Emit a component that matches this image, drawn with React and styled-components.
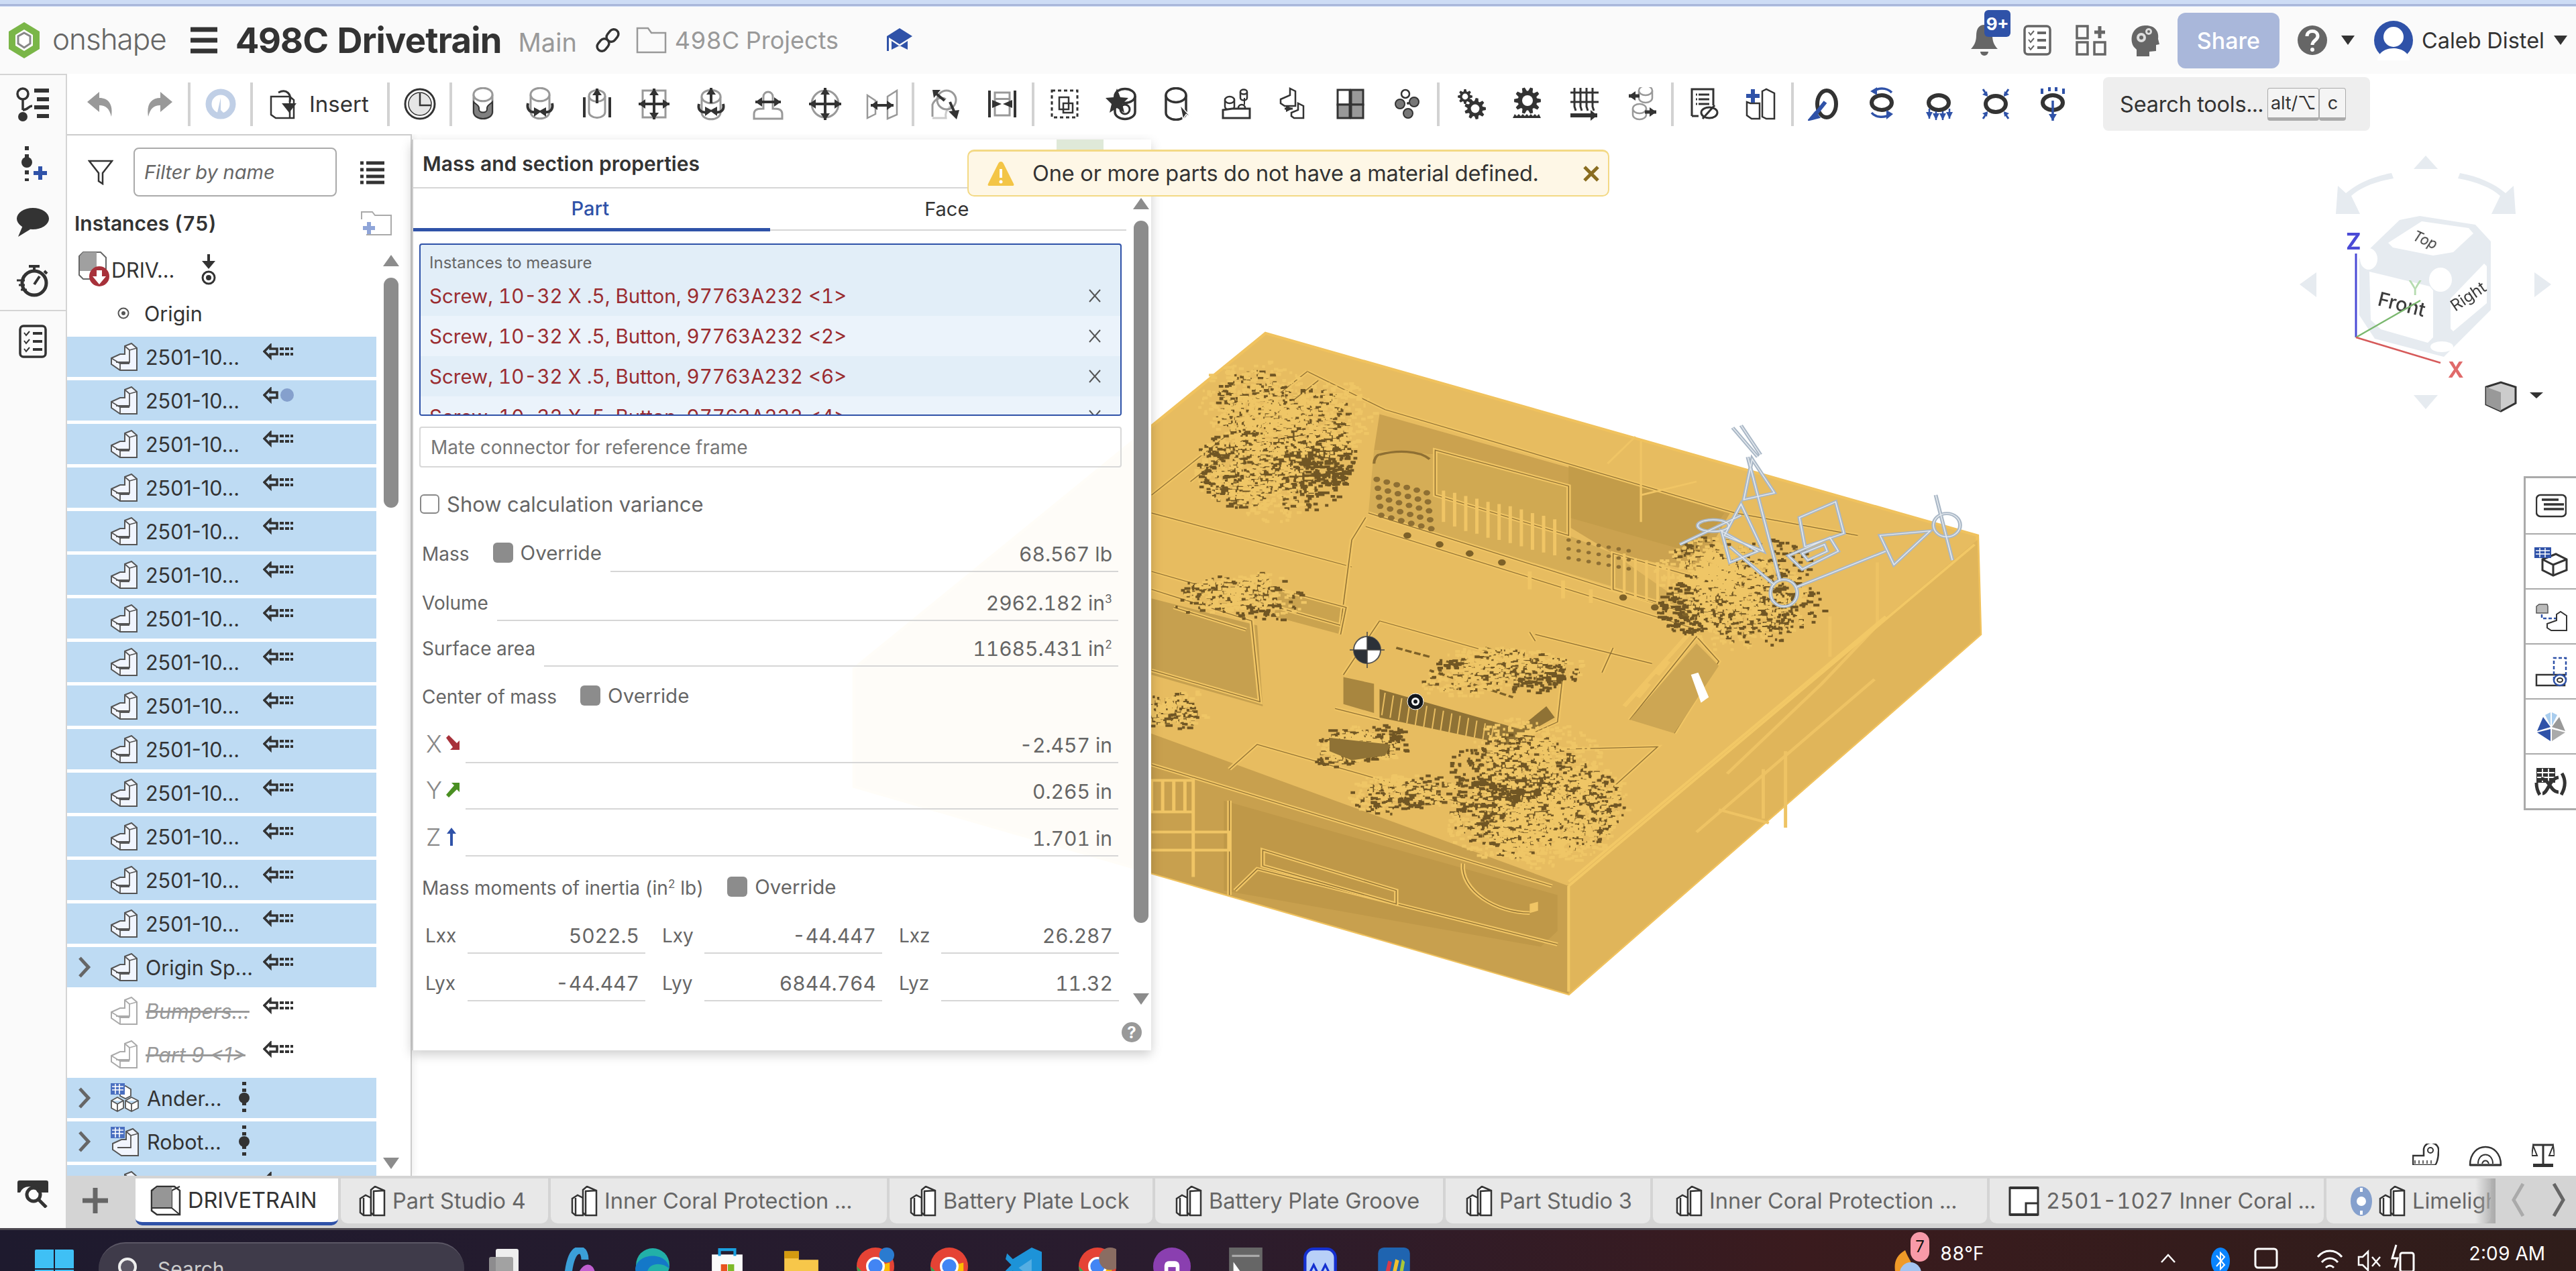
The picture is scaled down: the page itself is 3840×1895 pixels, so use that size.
import React from 'react'
import styled, { createGlobalStyle } from 'styled-components'

const D = '#333'
const G = '#999'
const B = '#2f52a8'

const Global = createGlobalStyle`
  html, body { margin: 0; padding: 0; background: #fff; overflow: hidden; }
  * { box-sizing: border-box; }
  body { font-family: Inter, "Noto Sans", sans-serif; color: #333; font-variant-numeric: tabular-nums; }
`

const Page = styled.div`
  width: 3840px;
  height: 1895px;
  display: flex;
  flex-direction: column;
  overflow: hidden;
`
const TopStrip = styled.div`
  height: 10px;
  background: #cddcf5;
  border-bottom: 1px solid #cddcf5;
  box-shadow: inset 0 -3px 0 #a9b7da;
`
const Header = styled.header`
  height: 100px;
  background: #fafafa;
  display: flex;
  align-items: center;
  padding-left: 12px;
`
const LogoText = styled.span`
  font-size: 44px;
  font-weight: 300;
  color: #666;
  margin: -4px 36px 0 18px;
  letter-spacing: -1px;
`
const DocTitle = styled.h1`
  margin: 0 0 0 28px;
  font-size: 52.5px;
  font-weight: 700;
  color: #333;
  letter-spacing: -.8px;
`
const Muted = styled.span`
  font-size: ${p => p.$size || 38}px;
  color: #999;
  margin: ${p => p.$m || '0'};
`
const HeaderRight = styled.div`
  margin-left: auto;
  display: flex;
  align-items: center;
  position: relative;
`
const Badge = styled.span`
  position: absolute;
  left: 39px;
  top: -20px;
  width: 39px;
  height: 40px;
  border-radius: 6px;
  background: ${B};
  color: #fff;
  font-size: 26px;
  font-weight: 700;
  display: flex;
  align-items: center;
  justify-content: center;
`
const ShareBtn = styled.button`
  width: 152px;
  height: 83px;
  border: 0;
  border-radius: 12px;
  background: #a9b7da;
  color: #fff;
  font: 500 34px Inter, sans-serif;
  margin: 0 26px 0 9px;
`
const UserName = styled.span`
  font-size: 32.5px;
  color: #333;
  margin: 0 14px 0 12px;
  white-space: nowrap;
`
const HeadIcon = styled.span`
  display: flex;
  width: ${p => p.$w || 80}px;
  justify-content: center;
  position: relative;
`

const Body = styled.div`
  flex: 1;
  display: flex;
  min-height: 0;
`
const Rail = styled.nav`
  width: 100px;
  background: #fafafa;
  border-right: 2px solid #d4d4d4;
  border-top: 2px solid #d4d4d4;
  display: flex;
  flex-direction: column;
  align-items: center;
`
const RailSlot = styled.div`
  height: ${p => p.$h || 88}px;
  width: 100%;
  display: flex;
  align-items: center;
  justify-content: center;
  border-bottom: ${p => (p.$line ? '2px solid #d4d4d4' : '0')};
`
const RailFoot = styled.div`
  margin-top: auto;
  height: 72px;
  display: flex;
  align-items: flex-start;
`
const Main = styled.main`
  flex: 1;
  display: flex;
  flex-direction: column;
  min-width: 0;
`
const Toolbar = styled.div`
  height: 90px;
  display: flex;
  align-items: center;
  padding-left: 6px;
  background: #fff;
`
const Tool = styled.span`
  width: 85px;
  height: 50px;
  display: flex;
  align-items: center;
  justify-content: center;
  flex: none;
`
const ToolGroup = styled.div`
  display: flex;
  align-items: center;
  padding-left: ${p => p.$pl || 0}px;
  padding-right: ${p => p.$pr || 0}px;
`
const Sep = styled.i`
  width: 4px;
  height: 65px;
  background: #d2d2d2;
  flex: none;
`
const InsertBtn = styled.div`
  width: 200px;
  display: flex;
  align-items: center;
  gap: 12px;
  padding-left: 22px;
  font-size: 33px;
  color: #333;
`
const SearchPill = styled.div`
  margin-left: 31px;
  width: 398px;
  height: 80px;
  border-radius: 8px;
  background: #eee;
  display: flex;
  align-items: center;
  padding-left: 25px;
  font-size: 32.5px;
  letter-spacing: -.2px;
  color: #333;
  white-space: nowrap;
`
const Kbd = styled.kbd`
  font: 27px Inter, sans-serif;
  height: 49px;
  padding: 0 4px;
  min-width: 40px;
  margin-left: ${p => p.$ml || 0}px;
  display: flex;
  align-items: center;
  justify-content: center;
  border: 1px solid #aaa;
  border-bottom: 5px solid #aaa;
  border-radius: 4px;
  background: #f4f4f4;
`

const Workspace = styled.section`
  flex: 1;
  position: relative;
  min-height: 0;
  overflow: hidden;
  background: #fff;
`
const ModelCanvas = styled.svg`
  position: absolute;
  left: 0;
  top: 0;
`

/* instance list */
const ListPanel = styled.aside`
  position: relative;
  width: 514px;
  height: 100%;
  background: #fff;
  border-top: 2px solid #ccc;
  border-right: 2px solid #ccc;
  display: flex;
  flex-direction: column;
  overflow: hidden;
  box-shadow: 4px 0 8px rgba(0, 0, 0, .06);
`
const FilterRow = styled.div`
  display: flex;
  align-items: center;
  padding-top: 18px;
  height: 91px;
  flex: none;
`
const FunnelSlot = styled.div`
  width: 99px;
  display: flex;
  justify-content: center;
`
const FilterBox = styled.div`
  width: 303px;
  height: 73px;
  margin-right: 35px;
  border: 2px solid #aaa;
  border-radius: 8px;
  display: flex;
  align-items: center;
  padding-left: 14px;
  font-size: 29px;
  font-style: italic;
  color: #666;
`
const ListHead = styled.div`
  height: 79px;
  flex: none;
  display: flex;
  align-items: center;
  justify-content: space-between;
  padding: 0 28px 0 11px;
  font-size: 30px;
  font-weight: 600;
`
const ListScroll = styled.div`
  flex: 1;
  display: flex;
  min-height: 0;
`
const Rows = styled.div`
  width: 461px;
  display: flex;
  flex-direction: column;
  gap: 5px;
  overflow: hidden;
`
const Row = styled.div`
  height: 60px;
  flex: none;
  display: flex;
  align-items: center;
  background: ${p => (p.$sel ? '#bedbf3' : 'transparent')};
  padding-left: 16px;
  font-size: 30.5px;
  font-variant-numeric: normal;
  color: #333;
`
const Chevron = styled.span`
  width: 49px;
  display: flex;
  flex: none;
`
const RowName = styled.span`
  margin-left: ${p => p.$ml ?? 12}px;
  width: ${p => p.$w || 175}px;
  flex: none;
  white-space: nowrap;
  color: ${p => (p.$off ? '#999' : '#333')};
  font-style: ${p => (p.$off ? 'italic' : 'normal')};
  text-decoration: ${p => (p.$off ? 'line-through' : 'none')};
`
const ScrollCol = styled.div`
  width: ${p => p.$w || 38}px;
  margin-left: ${p => p.$ml || 0}px;
  display: flex;
  flex-direction: column;
  align-items: center;
  padding: ${p => p.$pad || '8px 0 10px 6px'};
`
const ArrowUp = styled.i`
  width: 0;
  height: 0;
  flex: none;
  border: 12px solid transparent;
  border-top: 0;
  border-bottom: 17px solid #8c8c8c;
`
const ArrowDown = styled(ArrowUp)`
  border-bottom: 0;
  border-top: 17px solid #8c8c8c;
  margin-top: auto;
`
const Thumb = styled.i`
  width: 22px;
  height: ${p => p.$h}px;
  margin-top: ${p => p.$mt || 17}px;
  border-radius: 11px;
  background: #8c8c8c;
  flex: none;
`

/* mass panel */
const MassPanel = styled.div`
  position: absolute;
  left: 514px;
  top: 8px;
  width: 1102px;
  height: 1358px;
  background: rgba(255, 255, 255, .955);
  box-shadow: 0 6px 16px rgba(0, 0, 0, .2);
  border-left: 2px solid #ccc;
  display: flex;
`
const MassBody = styled.div`
  width: 1063px;
  flex: none;
  display: flex;
  flex-direction: column;
`
const MassTitle = styled.h2`
  margin: 0;
  height: 73px;
  flex: none;
  padding: 0 0 0 14px;
  border-bottom: 2px solid #d6d6d6;
  display: flex;
  align-items: center;
  font-size: 30px;
  font-weight: 600;
  color: #333;
  width: 1100px;
`
const PanelTabs = styled.div`
  display: flex;
  flex: none;
  height: 63px;
  border-bottom: 2px solid #d6d6d6;
`
const PanelTab = styled.div`
  width: 50%;
  display: flex;
  align-items: center;
  justify-content: center;
  padding-right: 4px;
  font-size: 29px;
  font-weight: ${p => (p.$on ? 500 : 400)};
  color: ${p => (p.$on ? B : '#333')};
  border-bottom: ${p => (p.$on ? `5px solid ${B}` : '0')};
  margin-bottom: ${p => (p.$on ? '-3px' : '0')};
`
const InstBox = styled.div`
  margin: 19px 7px 0 9px;
  height: 257px;
  flex: none;
  border: 2px solid ${B};
  border-radius: 4px;
  background: #e2eef8;
  overflow: hidden;
`
const InstLabel = styled.div`
  height: 46px;
  padding: 12px 0 0 13px;
  font-size: 24px;
  color: #666;
`
const InstRow = styled.div`
  height: 60px;
  display: flex;
  align-items: center;
  justify-content: space-between;
  padding: 0 28px 0 13px;
  font-size: 29.5px;
  color: #9a2c30;
  background: ${p => (p.$alt ? '#ebf3fb' : '#e2eef8')};
`
const MateInput = styled.div`
  margin: 16px 7px 0 9px;
  height: 61px;
  flex: none;
  border: 2px solid #d8d8d8;
  border-radius: 4px;
  display: flex;
  align-items: center;
  padding-left: 15px;
  font-size: 28px;
  color: #777;
`
const VarRow = styled.label`
  margin: 23px 0 0 10px;
  height: 62px;
  flex: none;
  display: flex;
  align-items: center;
  gap: 11px;
  font-size: 31px;
  color: #666;
`
const EmptyCheck = styled.i`
  width: 29px;
  height: 29px;
  border-radius: 6px;
  border: 2px solid #888;
`
const PropRow = styled.div`
  height: ${p => p.$h}px;
  flex: none;
  display: flex;
  align-items: flex-end;
  gap: 13px;
  padding: 0 12px 0 13px;
  font-size: 28px;
  color: #666;
`
const PropText = styled.span`
  line-height: 36px;
  padding-bottom: 9px;
  white-space: nowrap;
  sup { font-size: 17px; line-height: 0; }
`
const Field = styled.div`
  flex: 1;
  height: 45px;
  line-height: 36px;
  font-size: 30px;
  padding: 0 9px 0 0;
  margin-left: ${p => p.$ml || 0}px;
  text-align: right;
  border-bottom: 2px solid #d6d6d6;
  white-space: nowrap;
  sup { font-size: 17px; line-height: 0; }
`
const Override = styled.span`
  display: flex;
  align-items: center;
  gap: 11px;
  padding-bottom: 11px;
  margin-left: ${p => p.$ml || 22}px;
  font-size: 29.5px;
`
const FilledCheck = styled.i`
  width: 30px;
  height: 30px;
  border-radius: 6px;
  background: #8c8c8c;
`
const AxisLabel = styled.span`
  width: 64px;
  flex: none;
  font-size: 36px;
  font-weight: 300;
  color: #888;
  display: flex;
  align-items: center;
  gap: 4px;
  padding: 0 0 7px 6px;
`
const InertiaRow = styled.div`
  height: ${p => p.$h}px;
  flex: none;
  display: flex;
  align-items: flex-end;
  gap: 25px;
  padding-left: 18px;
  font-size: 28px;
  color: #666;
`
const InertiaCell = styled.div`
  width: 328px;
  display: flex;
  align-items: flex-end;
`
const InertiaName = styled.span`
  width: 63px;
  flex: none;
  line-height: 36px;
  padding-bottom: 9px;
`
const MassFoot = styled.span`
  position: absolute;
  right: 14px;
  bottom: 12px;
  width: 30px;
  height: 30px;
  border-radius: 50%;
  background: #999;
  color: #fff;
  font-size: 24px;
  font-weight: 700;
  display: flex;
  align-items: center;
  justify-content: center;
`
const Toast = styled.div`
  position: absolute;
  left: 1342px;
  top: 23px;
  width: 957px;
  height: 70px;
  border: 2px solid #f3d985;
  border-top-width: 3px;
  border-radius: 10px;
  background: #fef7e6;
  display: flex;
  align-items: center;
  padding-left: 28px;
  font-size: 32.5px;
  letter-spacing: -.1px;
  color: #333;
  gap: 27px;
  white-space: nowrap;
`
const ToastClose = styled.b`
  margin-left: auto;
  margin-right: 12px;
  color: #8a6d20;
`
const GreenPatch = styled.i`
  position: absolute;
  left: 1475px;
  top: 8px;
  width: 70px;
  height: 16px;
  background: #dfe9d8;
`
const CubeSvg = styled.svg`
  position: absolute;
  left: 3320px;
  top: 30px;
`
const Dock = styled.div`
  position: absolute;
  right: 0;
  top: 510px;
  width: 78px;
  border: 3px solid #aaa;
  border-right: 0;
  background: #fff;
`
const DockCell = styled.div`
  height: 82px;
  display: flex;
  align-items: center;
  justify-content: center;
  border-top: ${p => (p.$first ? '0' : '2px solid #aaa')};
`
const MeasureTools = styled.div`
  position: absolute;
  right: 32px;
  bottom: 12px;
  display: flex;
  gap: 44px;
`

/* tabs */
const TabBar = styled.div`
  height: 78px;
  flex: none;
  background: #d4d4d4;
  display: flex;
  padding-top: 4px;
  gap: 4px;
  position: relative;
`
const AddTab = styled.div`
  width: 98px;
  display: flex;
  align-items: center;
  justify-content: center;
  padding: 0 14px 8px 0;
`
const Tab = styled.div`
  width: ${p => p.$w}px;
  height: ${p => (p.$on ? 70 : 67)}px;
  flex: none;
  border-radius: 0 0 10px 10px;
  background: ${p => (p.$on ? '#fff' : '#e8e8e8')};
  border-bottom: ${p => (p.$on ? `5px solid ${B}` : '0')};
  display: flex;
  align-items: center;
  gap: 10px;
  padding-left: ${p => p.$pl || 26}px;
  font-size: 32.5px;
  color: ${p => (p.$on ? '#333' : '#666')};
  white-space: nowrap;
  overflow: hidden;
`
const TabFade = styled.i`
  position: absolute;
  left: 3590px;
  top: 4px;
  width: 30px;
  height: 67px;
  background: linear-gradient(90deg, rgba(180, 180, 180, 0), #aaa);
`
const TabArrows = styled.div`
  position: absolute;
  right: 16px;
  top: 10px;
  display: flex;
  gap: 40px;
`

/* windows taskbar */
const Taskbar = styled.footer`
  height: 64px;
  flex: none;
  border-top: 3px solid #4c4850;
  background: linear-gradient(90deg, #1e1a2e 0%, #2a1c2e 45%, #3a1b1e 70%, #2f1d1a 100%);
  display: flex;
  color: #fff;
  overflow: hidden;
  position: relative;
`
const StartSlot = styled.div`
  width: 147px;
  padding: 29px 0 0 52px;
`
const TaskSearch = styled.div`
  width: 545px;
  height: 80px;
  margin-top: 18px;
  border-radius: 40px;
  background: #3f3b4a;
  border-top: 2px solid #5b5765;
  display: flex;
  align-items: flex-start;
  gap: 30px;
  padding: 20px 0 0 28px;
  font-size: 30px;
  color: #ccc;
`
const AppRow = styled.div`
  display: flex;
  margin-left: 5px;
  padding-top: 26px;
`
const AppSlot = styled.div`
  width: 110.5px;
  display: flex;
  justify-content: center;
`
const Tray = styled.div`
  position: absolute;
  left: ${p => p.$x}px;
  top: ${p => p.$y}px;
  font-size: ${p => p.$fs || 28}px;
  white-space: nowrap;
`
const TrayBadge = styled(Tray)`
  width: 28px;
  height: 44px;
  border-radius: 14px;
  background: #f79aa8;
  color: #111;
  text-align: center;
  line-height: 44px;
`
const Gap = styled.span`
  width: ${p => p.$w}px;
  flex: none;
`

/* --------- drawings --------- */
const Svg = ({ s = 50, w, h, vb = '0 0 50 50', children }) => (
  <svg width={w || s} height={h || s} viewBox={vb} style={{ flex: 'none', display: 'block' }}>{children}</svg>
)
const Cyl = ({ x = 25, y = 10, h = 28, r = 14, fill = '#fff', stroke = G, sw = 3 }) => (
  <g fill={fill} stroke={stroke} strokeWidth={sw}>
    <path d={`M${x - r} ${y}V${y + h}A${r} ${r * 0.7} 0 0 0 ${x + r} ${y + h}V${y}`} />
    <ellipse cx={x} cy={y} rx={r} ry={r * 0.7} />
  </g>
)
const ArrowV = ({ x = 25, y1, y2, c = D, both, sw = 4, hw = 7 }) => {
  const dir = y2 > y1 ? 1 : -1
  return (
    <g fill={c} stroke="none">
      <rect x={x - sw / 2} y={Math.min(y1, y2)} width={sw} height={Math.abs(y2 - y1)} />
      <polygon points={`${x - hw} ${y2 - dir * 10} ${x + hw} ${y2 - dir * 10} ${x} ${y2}`} />
      {both && <polygon points={`${x - hw} ${y1 + dir * 10} ${x + hw} ${y1 + dir * 10} ${x} ${y1}`} />}
    </g>
  )
}
const ArrowH = ({ y = 25, x1, x2, c = D, both, sw = 4, hw = 7 }) => {
  const dir = x2 > x1 ? 1 : -1
  return (
    <g fill={c} stroke="none">
      <rect x={Math.min(x1, x2)} y={y - sw / 2} width={Math.abs(x2 - x1)} height={sw} />
      <polygon points={`${x2 - dir * 10} ${y - hw} ${x2 - dir * 10} ${y + hw} ${x2} ${y}`} />
      {both && <polygon points={`${x1 + dir * 10} ${y - hw} ${x1 + dir * 10} ${y + hw} ${x1} ${y}`} />}
    </g>
  )
}
const gearD = (cx, cy, ro, ri, n) => {
  let d = ''
  for (let i = 0; i < n; i++) {
    const a = (i / n) * Math.PI * 2
    const st = (Math.PI * 2) / n / 4
    const pts = [[ri, a - st * 1.5], [ro, a - st * 0.7], [ro, a + st * 0.7], [ri, a + st * 1.5]]
    pts.forEach(([r, t], k) => {
      d += `${i === 0 && k === 0 ? 'M' : 'L'}${(cx + r * Math.cos(t)).toFixed(1)} ${(cy + r * Math.sin(t)).toFixed(1)}`
    })
  }
  return d + 'Z'
}
const Gear = ({ x, y, r, n = 8, hole = 0.4, holeFill = '#fff' }) => (
  <g>
    <path d={gearD(x, y, r, r * 0.72, n)} fill={D} />
    <circle cx={x} cy={y} r={r * hole} fill={holeFill} />
  </g>
)
const Curve = ({ d, c = D, w = 4 }) => <path d={d} fill="none" stroke={c} strokeWidth={w} />
const Tri = ({ p, c = D }) => <polygon points={p} fill={c} />

const ringIcon = (extra) => (
  <Svg><ellipse cx="25" cy="23" rx="15" ry="11" fill="none" stroke={D} strokeWidth="6" />{extra}</Svg>
)

const TOOL_ICONS = {
  undo: <Svg><path d="M22 7 4 22l18 15V27c10 0 15 5 18 17 3-18-4-28-18-28z" fill={G} /></Svg>,
  redo: <Svg><path d="M28 7l18 15-18 15V27c-10 0-15 5-18 17-3-18 4-28 18-28z" fill={G} /></Svg>,
  update: <Svg><circle cx="25" cy="25" r="18" fill="none" stroke="#c0cfe6" strokeWidth="9" /><path d="M25 16v18l8 8h-14z" fill="#c0cfe6" /></Svg>,
  insert: <Svg><path d="M5 14h28v32H12l-7-5zM33 14l6 5v27h-6" fill="#fff" stroke={D} strokeWidth="2.5" /><Curve d="M16 8c12-6 20 2 17 14" w={3} /><Tri p="21,24 43,24 32,38" /></Svg>,
  clock: <Svg><circle cx="25" cy="25" r="22" fill="#fff" stroke={D} strokeWidth="3" /><circle cx="25" cy="25" r="17" fill="#e6e6e6" stroke={D} strokeWidth="1.5" /><path d="M25 9V27H41" fill="none" stroke={D} strokeWidth="2.5" /></Svg>,
  fasten: <Svg><Cyl y={11} h={26} /><path d="M11 22c4 4 8 5 8 9v2c0 6 12 6 12 0v-2c0-4 4-5 8-9v15a14 10 0 0 1-28 0z" fill="#808080" stroke={D} strokeWidth="2" /></Svg>,
  revolute: <Svg><Cyl y={11} h={26} /><Curve d="M7 24c-2 8 2 15 13 13" /><Tri p="16,30 27,36 16,44" /><Curve d="M43 24c2 8-2 15-13 13" /><Tri p="34,30 23,36 34,44" /></Svg>,
  slider: <Svg><Cyl y={13} h={24} r={12} /><rect x="4" y="15" width="4" height="30" fill={D} /><rect x="42" y="15" width="4" height="30" fill={D} /><ArrowV y1={24} y2={2} /></Svg>,
  planar: <Svg><rect x="8" y="5" width="34" height="40" fill="#fff" stroke={G} strokeWidth="3" /><ArrowV y1={2} y2={48} both /><ArrowH y={25} x1={2} x2={48} both /></Svg>,
  cylind: <Svg><Cyl y={14} h={24} /><Curve d="M7 25c-2 8 2 14 13 12" /><Tri p="16,29 27,35 16,43" /><Curve d="M43 25c2 8-2 14-13 12" /><Tri p="34,29 23,35 34,43" /><ArrowV y1={24} y2={1} /></Svg>,
  pin: <Svg><path d="M18 14v18c-6 0-14 0-14 8v7h42v-7c0-8-8-8-14-8V14a7 7 0 0 0-14 0z" fill="#fff" stroke={G} strokeWidth="3" /><ArrowH y={22} x1={6} x2={44} both /></Svg>,
  ball: <Svg><circle cx="25" cy="25" r="20" fill="#fff" stroke={G} strokeWidth="3" /><ArrowV y1={1} y2={49} both /><ArrowH y={25} x1={1} x2={49} both /></Svg>,
  parallel: <Svg><path d="M3 12l12 8v20l-12 6zM47 5v36l-14 6V14z" fill="#fff" stroke={G} strokeWidth="2.5" /><ArrowH y={27} x1={8} x2={42} both /></Svg>,
  tangent: <Svg><path d="M6 44V26c4-10 14-12 20-8" fill="none" stroke={G} strokeWidth="3" /><path d="M6 46h20c-2-14 6-12 6-18" fill="none" stroke="#ccc" strokeWidth="3" /><circle cx="27" cy="19" r="14" fill="none" stroke={G} strokeWidth="3" /><Curve d="M12 10l12 10" /><Tri p="6,4 18,4 8,16" /><Curve d="M32 22l8 18" /><Tri p="30,36 46,34 42,48" /></Svg>,
  width: <Svg><rect x="4" y="5" width="4" height="40" fill={D} /><rect x="42" y="5" width="4" height="40" fill={D} /><rect x="14" y="8" width="22" height="34" fill="#fff" stroke={G} strokeWidth="3" /><rect x="14" y="16" width="22" height="3" fill={G} /><Tri p="10,19 24,25 10,31" /><Tri p="40,19 26,25 40,31" /></Svg>,
  group: <Svg><rect x="5" y="5" width="38" height="40" fill="none" stroke={D} strokeWidth="3" strokeDasharray="5 4" /><rect x="16" y="15" width="14" height="18" fill="#fff" stroke={D} strokeWidth="2.5" /><rect x="22" y="24" width="14" height="14" fill="none" stroke={D} strokeWidth="2.5" /></Svg>,
  replicate: <Svg><Cyl x={29} y={13} h={24} r={15} sw={3.5} stroke={D} /><rect x="22" y="26" width="14" height="14" rx="7" fill="#fff" stroke={D} strokeWidth="3" /><polygon points="17,2 22,15 34,16 25,25 28,38 17,31 6,38 9,25 0,16 12,15" fill={D} /></Svg>,
  connector: <Svg><Cyl x={20} y={12} h={26} r={15} sw={3.5} stroke={D} /><path d="M28 26v22l6-6 7 7z" fill={D} stroke="#fff" strokeWidth="1.5" transform="rotate(-12 28 36)" /></Svg>,
  explode: <Svg><Cyl x={36} y={7} h={9} r={5} sw={2.5} stroke={D} /><Cyl x={15} y={19} h={10} r={7} sw={2.5} stroke={D} /><circle cx="33" cy="31" r="5" fill="#fff" stroke={D} strokeWidth="2.5" /><rect x="36" y="16" width="2" height="10" fill={D} /><path d="M5 34l14-2 26 0v14H5z" fill="#fff" stroke={D} strokeWidth="3" /></Svg>,
  lparts: <Svg><path d="M6 18l14-6V2l8 4v22H12l-6-4z" fill="#fff" stroke={D} strokeWidth="2.5" /><path d="M22 38l10-4V24l8 4v18H26l-4-3z" fill="#fff" stroke={D} strokeWidth="2.5" /><ArrowH y={32} x1={12} x2={24} sw={3} hw={5} /></Svg>,
  boxes: <Svg><rect x="6" y="4" width="18" height="22" fill="#fff" stroke={D} strokeWidth="3" /><rect x="26" y="4" width="18" height="22" fill="#999" stroke={D} strokeWidth="3" /><rect x="6" y="26" width="18" height="20" fill="#999" stroke={D} strokeWidth="3" /><rect x="26" y="26" width="18" height="20" fill="#999" stroke={D} strokeWidth="3" /></Svg>,
  balls: <Svg><circle cx="22" cy="10" r="6" fill="#fff" stroke={D} strokeWidth="2.5" /><circle cx="14" cy="25" r="7" fill="#777" stroke={D} strokeWidth="2" /><circle cx="35" cy="22" r="7" fill="#777" stroke={D} strokeWidth="2" /><circle cx="26" cy="39" r="7" fill="#777" stroke={D} strokeWidth="2" /><circle cx="26" cy="24" r="2" fill={D} /></Svg>,
  gears: <Svg><Gear x={17} y={14} r={11} /><Gear x={32} y={32} r={16} n={9} /></Svg>,
  gearBase: <Svg><Gear x={25} y={20} r={20} n={10} /><path d="M3 46l3-6 3 3 3-3 3 3 3-3 3 3 3-3 3 3 3-3 3 3 3-3 3 3 3-3 3 6z" fill={D} /></Svg>,
  rack: <Svg><g fill="none" stroke={D} strokeWidth="3"><path d="M4 8h42M4 22h42M10 1v28l2 6M19 1v28l2 6M28 1v28l2 6M37 1v28l2 6" /></g><ArrowH y={42} x1={4} x2={44} sw={6} hw={8} /></Svg>,
  linear: <Svg><Cyl x={31} y={5} h={11} r={10} sw={2.5} /><Cyl x={22} y={32} h={9} r={10} sw={2.5} /><ArrowH y={13} x1={22} x2={6} sw={5} /><ArrowH y={37} x1={30} x2={47} sw={5} /></Svg>,
  docSlash: <Svg><path d="M6 43V3h32v24" fill="none" stroke={D} strokeWidth="3" /><path d="M16 11h16M16 18h16M16 25h16" stroke={D} strokeWidth="3" /><path d="M12 11h2M12 18h2M12 25h2M6 43h10" stroke={D} strokeWidth="3" /><ellipse cx="32" cy="38" rx="12" ry="8" fill="none" stroke={D} strokeWidth="3" /><path d="M22 47l18-20" stroke={D} strokeWidth="3" /></Svg>,
  chartPlus: <Svg><path d="M3 22v20l7 5h12V24H8z" fill="#fff" stroke={D} strokeWidth="2.5" /><path d="M26 6l6-3 12 6v38H32l-6-3z" fill="#fff" stroke={D} strokeWidth="2.5" /><path d="M2 13h20M12 3v20" stroke={B} strokeWidth="6" /></Svg>,
  ringPath: <Svg><ellipse cx="28" cy="25" rx="14" ry="20" fill="none" stroke={D} strokeWidth="6" /><path d="M6 46l8-2-3-4zM26 22L10 42" stroke={B} strokeWidth="6" fill={B} /></Svg>,
  ringSwap: ringIcon(<g><Curve d="M12 8c6-8 20-8 28 0" c={B} w={3.5} /><Tri p="18,0 8,6 18,12" c={B} /><Curve d="M10 38c6 8 20 8 28 2" c={B} w={3.5} /><Tri p="32,34 42,40 32,48" c={B} /></g>),
  ringDown: ringIcon(<g><ArrowV x={11} y1={32} y2={47} c={B} sw={2.5} hw={5} /><ArrowV x={21} y1={36} y2={49} c={B} sw={2.5} hw={5} /><ArrowV x={31} y1={36} y2={49} c={B} sw={2.5} hw={5} /><ArrowV x={41} y1={32} y2={47} c={B} sw={2.5} hw={5} /></g>),
  ringIn: <Svg><ellipse cx="25" cy="25" rx="15" ry="12" fill="none" stroke={D} strokeWidth="6" /><g fill="none" stroke={B} strokeWidth="3"><path d="M6 3l6 9M44 3l-6 9M6 47l6-9M44 47l-6-9" /></g><Tri p="13,14 5,11 12,6" c={B} /><Tri p="37,14 45,11 38,6" c={B} /><Tri p="13,36 5,39 12,44" c={B} /><Tri p="37,36 45,39 38,44" c={B} /></Svg>,
  ringDrop: ringIcon(<g><path d="M9 2v8M20 0v6M30 0v6M41 2v8" stroke={B} strokeWidth="4" /><ArrowV x={25} y1={20} y2={50} c={B} sw={3.5} hw={6} /></g>),
}

const TOOL_GROUPS = [
  ['undo', 'redo'], ['update'], 'INSERT', ['clock'],
  ['fasten', 'revolute', 'slider', 'planar', 'cylind', 'pin', 'ball', 'parallel'],
  ['tangent', 'width'],
  ['group', 'replicate', 'connector', 'explode', 'lparts', 'boxes', 'balls'],
  ['gears', 'gearBase', 'rack', 'linear'],
  ['docSlash', 'chartPlus'],
  ['ringPath', 'ringSwap', 'ringDown', 'ringIn', 'ringDrop'],
]

const PartIcon = ({ off }) => {
  const c = off ? '#aaa' : '#555'
  return (
    <Svg w={40} h={42} vb="0 0 40 42">
      <path d="M1 23l13-6 7 0V5l10-4 8 7v33H14L1 32z" fill={off ? '#fff' : '#f1f5fe'} stroke={c} strokeWidth="2" />
      <path d="M21 5l7 6v18H8M28 11l11-3M1 23l13 8v10M14 31h14" fill="none" stroke={c} strokeWidth="1.8" />
    </Svg>
  )
}
const TableBadge = () => (
  <g fill="#4a6fc0"><rect x="0" y="0" width="21" height="17" /><path d="M2 5h17M2 10h17M7 1v15M13 1v15" stroke="#fff" strokeWidth="1.6" /></g>
)
const SubAsmIcon = () => (
  <Svg w={42} h={44} vb="0 0 42 44">
    <g fill="#fff" stroke="#555" strokeWidth="1.8">
      <path d="M14 8l8-4 8 5v10l-8 4-8-4z" />
      <path d="M1 26l9-5 9 5v11l-9 5-9-5zM1 26l9 5 9-5M10 31v11" />
      <path d="M22 26l9-5 10 5v11l-10 5-9-5zM22 26l9 5 10-5M31 31v11" />
    </g>
    <TableBadge />
  </Svg>
)
const PartSetIcon = () => (
  <Svg w={42} h={44} vb="0 0 42 44">
    <g transform="translate(2 2)"><path d="M1 23l13-6 7 0V5l10-4 8 7v33H14L1 32z" fill="#f1f5fe" stroke="#555" strokeWidth="2" /><path d="M21 5l7 6v18H8M28 11l11-3" fill="none" stroke="#555" strokeWidth="1.8" /></g>
    <TableBadge />
  </Svg>
)
const FixArrow = ({ dot }) => (
  <Svg w={46} h={40} vb="0 0 46 40">
    <path d="M11 3 2 12l9 9v-5h10V8H11z" fill="none" stroke={D} strokeWidth="3.5" />
    {dot ? <circle cx="36" cy="12" r="10" fill="#85a0cd" /> : <path d="M25 8h20M25 16h20" stroke={D} strokeWidth="4" strokeDasharray="6 2" fill="none" />}
  </Svg>
)
const ConnectorDot = () => (
  <Svg w={20} h={48} vb="0 0 20 48"><path d="M10 0v48" stroke={D} strokeWidth="6" strokeDasharray="5 5" /><circle cx="10" cy="24" r="8" fill={D} /></Svg>
)
const Chev = ({ c = '#666', s = 34 }) => (
  <Svg w={s * 0.58} h={s} vb="0 0 20 34"><path d="M3 3l13 14L3 31" fill="none" stroke={c} strokeWidth="5" /></Svg>
)

const AsmIcon = ({ w = 46, h = 46 }) => (
  <Svg w={w} h={h} vb="0 0 46 46">
    <path d="M2 8l8-6h26l8 6v36H10l-8-6z" fill="#fff" stroke={D} strokeWidth="2.5" />
    <path d="M2 8h30v26H2zM32 8l12-6M32 34l12 10" fill="none" stroke={D} strokeWidth="2" />
    <path d="M3 9l8-6h21v30H3z" fill="#969696" />
  </Svg>
)
const StudioIcon = () => (
  <Svg w={40} h={46} vb="0 0 40 46">
    <path d="M2 19l8-5 8 4v26H7l-5-4z" fill="#fff" stroke={D} strokeWidth="2.5" />
    <path d="M18 6l6-5 14 6v37H22l-4-4zM22 44V8l16-1M7 44V18" fill="#fff" stroke={D} strokeWidth="2.5" />
  </Svg>
)

const DrawIcon = () => (
  <Svg w={46} h={46} vb="0 0 46 46"><path d="M2 3h42v40H2z" fill="#fff" stroke={D} strokeWidth="3" /><path d="M2 3h42M2 43h42" stroke={D} strokeWidth="4" /><path d="M44 26H26v16" fill="none" stroke={D} strokeWidth="3" /></Svg>
)

const TABS = [
  { w: 309, label: 'Part Studio 4', pl: 27 },
  { w: 501, label: 'Inner Coral Protection ...', pl: 30 },
  { w: 392, label: 'Battery Plate Lock', pl: 30 },
  { w: 429, label: 'Battery Plate Groove', pl: 30 },
  { w: 305, label: 'Part Studio 3', pl: 30 },
  { w: 498, label: 'Inner Coral Protection ...', pl: 34 },
  { w: 498, label: '2501-1027 Inner Coral ...', pl: 28, draw: true },
  { w: 245, label: 'Limelight', pl: 36, lime: true },
]

const part = (name, extra = {}) => ({ name, ...extra })
const ROWS = [
  ...Array.from({ length: 14 }, (_, i) => part('2501-10...', { sel: true, dot: i === 1 })),
  part('Origin Sp...', { sel: true, chev: true }),
  part('Bumpers...', { off: true }),
  part('Part 9 <1>', { off: true }),
  part('Ander...', { sel: true, chev: true, kind: 'sub' }),
  part('Robot...', { sel: true, chev: true, kind: 'set' }),
  part('', { sel: true }),
]

/* scattered speckle for the model, repeatable */
const scatter = (clusters, seed) => {
  let s = seed
  const r = () => (s = (s * 16807) % 2147483647) / 2147483647
  let d = ''
  clusters.forEach(([cx, cy, rx, ry, n]) => {
    for (let b = 0; b < 10; b++) {
      const bx = cx + (r() * 2 - 1) * rx * 0.8
      const by = cy + (r() * 2 - 1) * ry * 0.8
      for (let i = 0; i < n / 10; i++) {
        const a = r() * 6.283
        const k = Math.sqrt(r())
        const x = Math.round(bx + Math.cos(a) * rx * 0.55 * k)
        const y = Math.round(by + Math.sin(a) * ry * 0.55 * k)
        const w = 4 + Math.floor(r() * 8)
        d += `M${x} ${y}h${w}v6h-${w}z`
      }
    }
  })
  return d
}
const CLUSTERS = [
  [265, 310, 135, 135, 1300], [710, 1080, 130, 140, 1500], [1090, 650, 125, 105, 900],
  [395, 985, 65, 35, 320], [640, 820, 120, 45, 360], [470, 1095, 75, 40, 180],
  [1030, 620, 35, 55, 180], [200, 650, 70, 45, 160], [55, 905, 45, 35, 110], [130, 640, 70, 40, 100],
]
const DARK = scatter(CLUSTERS, 12345)
const LIGHT = scatter(CLUSTERS, 98765)
const DOTS = []
for (let r = 0; r < 5; r++) for (let c = 0; c < 6; c++) DOTS.push([425 + c * 18 + r * 2, 395 + r * 20 + c * 6])
const DOTS2 = []
for (let r = 0; r < 3; r++) for (let c = 0; c < 7; c++) DOTS2.push([770 + c * 18, 530 + r * 20 + c * 4])
const RAIL_DOTS = [[480, 520], [538, 540], [592, 560], [650, 580], [868, 658], [925, 680], [980, 700], [240, 640]]

const Halo = ({ d, w = 8, dw = 1.8, dark = '#8f7033' }) => (
  <g fill="none">
    <path d={d} stroke="#f0c565" strokeWidth={w} />
    <path d={d} stroke={dark} strokeWidth={dw} />
  </g>
)

const HALO_LINES = [
  'M300 155L440 240L1070 470L1290 520',
  'M300 155L20 430M320 175L90 400M20 470L380 590',
  'M20 600L360 720L380 530L405 480',
  'M410 470L1000 700L990 740M405 500L990 725',
  'M20 640L200 710L215 890L20 820',
  'M60 680L190 730M250 640L370 680L360 740',
  'M430 710L760 825L750 935L660 985M365 830L430 710M350 905L430 930',
  'M710 740L920 805M700 735L710 755M850 770L830 825',
  'M880 930L1000 745L1040 800L960 960',
  'M20 1030L740 1300',
  'M170 1310L210 1262L750 1430M160 1110V1320',
  'M580 1250C575 1310 640 1360 700 1360',
  'M220 1220L460 1310V1340L220 1255Z',
  'M160 1040L210 985L620 1130',
  'M620 1000L930 990L850 1080',
  'M530 330L770 410V520L530 430Z',
  'M850 560L990 610V690L850 640Z',
]

const GIZMO = [
  'M1150 620L1092 345M1100 350l40 75-55 15zM1065 280l45 65M1080 275l35 65',
  'M1180 635l160-80M1330 520l90-10-65 75zM1430 430l30 145',
  'M1185 480l65-35 15 70-70 30zM1165 565l75-40 15 30-65 40zM1190 560l40-20 5 15-35 20z',
  'M1140 630l-80-85M1045 510l65 45-50 25zM970 540l110-65M1080 450l40 105-70-35z',
].join('')

const GizmoShapes = ({ c, w }) => (
  <g fill="none" stroke={c} strokeWidth={w}>
    <ellipse cx="1157" cy="648" rx="24" ry="30" />
    <ellipse cx="1450" cy="497" rx="24" ry="26" />
    <ellipse cx="1030" cy="498" rx="28" ry="13" />
    <path d={GIZMO} />
  </g>
)

const Model = () => (
  <ModelCanvas width="3740" height="1553" viewBox="100 200 3740 1553">
    <g transform="translate(1700 450) scale(.829 .67)">
      <polygon points="225,70 1505,520 1510,740 770,1540 -515,1079 -515,816" fill="#e7bc60" stroke="#f0c25e" strokeWidth="6" />
      <polygon points="770,1300 1505,530 1510,740 770,1540" fill="#e0b55a" />
      <polygon points="18,960 770,1300 770,1540 18,1270" fill="#c8a04e" />
      <polygon points="150,1110 750,1320 750,1400 720,1435 150,1310" fill="#bf9848" />
      <polygon points="430,250 1060,470 1000,600 850,560 770,500 530,340 420,330" fill="#cba24f" />
      <polygon points="420,330 530,340 530,430 770,520 850,560 1000,690 410,470" fill="#d5ad56" />
      <polygon points="20,660 210,720 220,900 20,830" fill="#c6a04f" />
      <polygon points="250,640 370,680 360,740 240,700" fill="#caa34f" />
      <polygon points="530,330 770,410 770,520 530,430" fill="#d0a952" />
      <polygon points="770,360 1050,470 1000,560 770,480" fill="#c39c49" />
      {HALO_LINES.map((d, i) => <Halo key={i} d={d} />)}
      <path d="M545 420v70M565 425v75M585 432v78M605 438v78M625 445v80M645 450v80M665 455v82M685 462v82M705 470v82M725 476v82M745 484v80" stroke="#f0c565" strokeWidth="6" />
      <path d="M870 560v90M890 570v90M910 575v90M930 580v90M950 590v90" stroke="#f0c565" strokeWidth="5" fill="none" />
      <path d="M700 600v40M760 620v40M810 640v30" fill="none" stroke="#f0c565" strokeWidth="7" />
      <path d="M430 340c30-10 70-10 90 10M420 360c0-10 5-20 10-20" fill="none" stroke="#8e6f33" strokeWidth="5" />
      <polygon points="365,835 420,850 420,915 365,895" fill="#a8863f" />
      <polygon points="430,862 680,950 730,900 745,925 660,985 430,925" fill="#8f7235" />
      <path d="M440 870l-6 50M455 876l-6 50M470 882l-6 50M485 888l-6 50M500 894l-6 50M515 899l-6 50M530 905l-6 50M545 910l-6 50M560 916l-6 50M575 921l-6 50M590 926l-6 50M605 932l-6 50M620 938l-6 50M635 944l-6 40" stroke="#e7bc60" strokeWidth="2.5" />
      <path d="M550 800l170 50M520 820l150 60M620 770l130 50M460 770l60 20" fill="none" stroke="#7d6128" strokeWidth="5" strokeDasharray="12 5" />
      <polygon points="880,930 1000,760 1040,810 960,960" fill="#cda653" />
      <polygon points="990,830 1003,825 1022,880 1008,892" fill="#fff" />
      <path d="M870 900l130-180M895 880l20-30M930 830l20-30" fill="none" stroke="#f0c565" strokeWidth="8" />
      <path d="M1325 580v140l-100 130-170 200M1240 700v90M1160 1000v170M1120 1040v110M1000 1180l320-340M1040 1130l90 30" fill="none" stroke="#eec364" strokeWidth="6" />
      <path d="M770 1290l570-590M1500 540l-730 760M770 1300v235" fill="none" stroke="#f2c866" strokeWidth="5" />
      <path d="M890 300l-50 60M1000 400l-100 30v60M900 310v150" fill="none" stroke="#f0c565" strokeWidth="4" />
      <path d="M20 1065h75v70H20zM40 1065v70M60 1065v70M80 1065v70M20 1180h140v40H20M95 1090v190" fill="none" stroke="#f0c565" strokeWidth="6" />
      <polygon points="700,1340 715,1335 715,1355 700,1360" fill="#f0c565" />
      {DOTS.map(([x, y], i) => <circle key={i} cx={x} cy={y} r="6" fill="#8e6f33" />)}
      {DOTS2.map(([x, y], i) => <circle key={i} cx={x} cy={y} r="4" fill="#8e6f33" />)}
      {RAIL_DOTS.map(([x, y], i) => <circle key={i} cx={x} cy={y} r="7" fill="#7d6128" />)}
      <path d={DARK} fill="#705624" />
      <path d={LIGHT} fill="#efc666" />
      <polygon points="340,970 450,985 440,1010 380,1020 340,1000" fill="#8f7235" />
      <GizmoShapes c="#a9b7c6" w={7} />
      <GizmoShapes c="#e4e9ee" w={2} />
    </g>
    <g>
      <circle cx="2038" cy="969" r="20" fill="#fff" stroke="#555" strokeWidth="2" />
      <path d="M2038 949a20 20 0 0 1 20 20h-20zM2038 989a20 20 0 0 1-20-20h20z" fill="#2c3138" />
      <path d="M2038 942v54M2012 969h52" stroke="#444" strokeWidth="1.5" />
      <circle cx="2110" cy="1046" r="12" fill="#12161c" stroke="#fff" strokeWidth="1" />
      <circle cx="2110" cy="1046" r="6" fill="#fff" />
      <circle cx="2110" cy="1046" r="3" fill="#12161c" />
    </g>
  </ModelCanvas>
)

const ViewCube = () => (
  <CubeSvg width="420" height="400" viewBox="3420 230 420 400">
    <g fill="#e6ebf0">
      <polygon points="3598,248 3634,248 3616,228" transform="translate(0 4)" />
      <polygon points="3428,424 3453,406 3453,443" />
      <polygon points="3778,406 3803,424 3778,443" />
      <polygon points="3598,589 3634,589 3616,610" />
      <path d="M3565 258l3 8c-28 5-50 14-63 26l13 27h-36l3-42 12 11c16-14 40-25 68-30z" />
      <path d="M3667 258l-3 8c28 5 50 14 63 26l-13 27h36l-3-42-12 11c-16-14-40-25-68-30z" />
      <polygon points="3607,322 3690,335 3713,360 3713,462 3643,532 3540,505 3517,470 3517,386 3577,328" />
    </g>
    <g fill="#fff">
      <path d="M3560 362l50-32 70 10 7 8-30 28-30 5-60-12z" />
      <path d="M3532 405l90 22 5 6v70l-8 8-70-20-15-14z" />
      <path d="M3653 445l50-52 4 4v55l-50 42-4-4z" />
      <ellipse cx="3531" cy="386" rx="13" ry="16" />
      <ellipse cx="3638" cy="417" rx="17" ry="18" />
      <ellipse cx="3640" cy="517" rx="17" ry="8" />
    </g>
    <g fill="#3c3c3c" fontFamily="Inter, sans-serif" filter="blur(.6px)">
      <text x="3543" y="0" fontSize="29" fontWeight="500" transform="translate(0 455) rotate(14 3543 0)">Front</text>
      <text x="3660" y="0" fontSize="24" transform="translate(0 465) rotate(-34 3660 0)">Right</text>
      <text x="3595" y="0" fontSize="21" fontStyle="italic" transform="translate(0 357) rotate(24 3595 0)">Top</text>
    </g>
    <path d="M3512 503V378" stroke="#4a4ad6" strokeWidth="3" />
    <path d="M3512 503l96-55" stroke="#7bb86f" strokeWidth="2.5" />
    <path d="M3512 503l126 38" stroke="#d65a5a" strokeWidth="2.5" />
    <text x="3497" y="372" fontSize="34" fontWeight="700" fill="#4a4ad6" fontFamily="Inter, sans-serif">Z</text>
    <text x="3590" y="440" fontSize="30" fill="#b6dcb0" fontFamily="Inter, sans-serif">Y</text>
    <text x="3649" y="563" fontSize="32" fontWeight="700" fill="#e06a6a" fontFamily="Inter, sans-serif">X</text>
    <path d="M3706 577l22-7 22 7v24l-22 12-22-10z" fill="#ccc" stroke={D} strokeWidth="3" />
    <path d="M3706 577l22 8v28l-22-10z" fill="#999" />
    <polygon points="3771,585 3791,585 3781,594" fill={D} />
  </CubeSvg>
)

const RedDownCube = () => (
  <Svg w={50} h={56} vb="0 0 50 56">
    <path d="M2 8l6-6h26l8 8v32H8l-6-6z" fill="#fff" stroke="#666" strokeWidth="2" />
    <path d="M3 8l5-6h20v28H3z" fill="#a0a0a0" />
    <circle cx="32" cy="38" r="15" fill="#a7313a" />
    <path d="M28 29h8v9h6L32 50 22 38h6z" fill="#fff" />
  </Svg>
)

const InstanceRow = ({ n, alt }) => (
  <InstRow $alt={alt}>
    <span>Screw, 10-32 X .5, Button, 97763A232 &lt;{n}&gt;</span>
    <Svg w={20} h={22} vb="0 0 20 22"><path d="M2 2l16 18M18 2 2 20" stroke="#555" strokeWidth="2" /></Svg>
  </InstRow>
)

const Axis = ({ l, c, d, v, h }) => (
  <PropRow $h={h}>
    <AxisLabel>{l}<Svg w={24} h={30} vb="0 0 24 30"><path d={d} fill={c} /></Svg></AxisLabel>
    <Field $ml={-12}>{v}</Field>
  </PropRow>
)

const ChromeBase = ({ children, s = 56 }) => (
  <Svg s={s}><circle cx="25" cy="25" r="25" fill="#e54335" /><path d="M5 40 25 25 44 20v25L25 50z" fill="#fbbc04" /><path d="M0 25 25 50 5 50z" fill="#34a853" /><circle cx="25" cy="25" r="11" fill="#4285f4" stroke="#fff" strokeWidth="3" />{children}</Svg>
)

const AppIcons = [
  <Svg key="a" w={50} h={60} vb="0 0 50 60"><rect x="12" y="2" width="34" height="44" fill="#eee" rx="3" /><rect x="2" y="14" width="36" height="46" fill="#999" opacity=".9" rx="3" /></Svg>,
  <Svg key="b" w={50} h={60} vb="0 0 50 60"><path d="M8 50C10 20 16 4 26 4c6 0 8 8 8 14" fill="none" stroke="#3b9fd8" strokeWidth="11" /><path d="M26 50c6-22 16-24 18-10" fill="none" stroke="#c05fd0" strokeWidth="11" /></Svg>,
  <Svg key="c" s={52}><circle cx="25" cy="25" r="24" fill="#22b0a8" /><path d="M0 30C4 6 46 6 49 30c-12-10-30-8-32 6-4 14 12 18 22 14C18 56 0 46 0 30z" fill="#1478c8" /></Svg>,
  <Svg key="d" s={52}><rect x="3" y="10" width="44" height="40" fill="#fafafa" /><path d="M14 12V3h22v9" fill="none" stroke="#1aa0e0" strokeWidth="4" /><rect x="16" y="24" width="9" height="22" fill="#e8531f" /><rect x="26" y="24" width="9" height="22" fill="#7db928" /></Svg>,
  <Svg key="e" s={54}><path d="M2 5h20v12h27v33H2z" fill="#f7c74a" /><path d="M2 5h20v10H2z" fill="#d49a10" /></Svg>,
  <ChromeBase key="f"><circle cx="40" cy="10" r="10" fill="#2a7bd0" /></ChromeBase>,
  <ChromeBase key="g" />,
  <Svg key="h" s={54}><path d="M36 0l14 6v44l-14 4-26-22-8 8-2-8 8-8-8-8 2-8 8 8z" fill="#1d93d8" /><path d="M36 16 18 28l18 14z" fill="#fff" opacity=".25" /></Svg>,
  <ChromeBase key="i"><circle cx="42" cy="15" r="15" fill="#8a6d62" /></ChromeBase>,
  <Svg key="j" s={56}><circle cx="25" cy="25" r="25" fill="#8a3fb0" /><rect x="15" y="18" width="20" height="30" rx="6" fill="#fff" /><rect x="20" y="26" width="10" height="30" fill="#8a3fb0" /></Svg>,
  <Svg key="k" s={54}><rect x="2" y="0" width="46" height="54" fill="#666" /><rect x="6" y="10" width="38" height="3" fill="#aaa" /><path d="M8 20v32l16-10z" fill="#fff" /></Svg>,
  <Svg key="l" s={54}><rect x="4" y="2" width="42" height="52" rx="12" fill="#b8d0f8" stroke="#1530d0" strokeWidth="4" /><path d="M8 40l8-16 8 16 8-16 8 16" fill="none" stroke="#1530d0" strokeWidth="3" /></Svg>,
  <Svg key="m" s={54}><rect x="3" y="0" width="44" height="54" rx="8" fill="#1f64b0" /><path d="M10 48l7-30 5 2-6 28z" fill="#d93a4a" /><path d="M20 48l7-32 5 2-7 30z" fill="#f0c030" /><path d="M30 48l6-32 4 4-5 28z" fill="#a8c838" /></Svg>,
]

export default function App() {
  return (
    <Page>
      <Global />
      <TopStrip />
      <Header>
        <Svg w={48} h={56} vb="0 0 48 56">
          <path d="M24 1 47 15v26L24 55 1 41V15z" fill="#7ab648" />
          <path d="M24 12 37 20v16L24 44 11 36V20z" fill="#fff" />
          <path d="M24 17 33 22v11l-9 6-9-6V22z" fill="none" stroke="#888" strokeWidth="3" />
        </Svg>
        <LogoText>onshape</LogoText>
        <Svg w={40} h={40} vb="0 0 40 40"><path d="M0 4h40M0 20h40M0 36h40" stroke={D} strokeWidth="7" /></Svg>
        <DocTitle>498C Drivetrain</DocTitle>
        <Muted $size={38} $m="6px 26px 0 25px">Main</Muted>
        <Svg w={40} h={40} vb="0 0 40 40"><g fill="none" stroke={D} strokeWidth="3.5"><rect x="20" y="3" width="14" height="20" rx="7" transform="rotate(40 27 13)" /><rect x="6" y="17" width="14" height="20" rx="7" transform="rotate(40 13 27)" /></g></Svg>
        <Gap $w={22} />
        <Svg w={46} h={40} vb="0 0 46 40"><path d="M2 38V2h16l5 7h21v29z" fill="none" stroke="#999" strokeWidth="2.5" /></Svg>
        <Muted $size={36} $m="0 70px 0 12px">498C Projects</Muted>
        <Svg w={42} h={40} vb="0 0 42 40">
          <polygon points="21,2 40,14 21,26 2,14" fill={B} />
          <path d="M9 21v13l12-6 12 6V21L21 29z" fill={B} />
          <rect x="2" y="14" width="3" height="22" fill={B} />
        </Svg>
        <HeaderRight>
          <HeadIcon $w={78}>
            <Svg w={44} h={50} vb="0 0 44 50"><path d="M22 2c8 0 12 6 12 16 0 10 4 16 8 20H2c4-4 8-10 8-20C10 8 14 2 22 2zM16 42h12a6 6 0 0 1-12 0z" fill="#666" /></Svg>
            <Badge>9+</Badge>
          </HeadIcon>
          <HeadIcon>
            <Svg w={42} h={46} vb="0 0 42 46"><rect x="2" y="2" width="38" height="42" rx="5" fill="#fff" stroke="#666" strokeWidth="3.5" /><path d="M8 11l3 4 5-6M8 22l3 4 5-6M8 33l3 4 5-6" fill="none" stroke="#666" strokeWidth="2" /><path d="M21 12h13M21 23h13M21 34h13" stroke="#666" strokeWidth="4" /></Svg>
          </HeadIcon>
          <HeadIcon>
            <Svg w={46} h={46} vb="0 0 46 46"><g fill="none" stroke="#666" strokeWidth="3.5"><rect x="2" y="2" width="16" height="18" /><rect x="2" y="26" width="16" height="18" /><rect x="28" y="26" width="16" height="18" /></g><path d="M36 2v18M28 11h16" stroke="#666" strokeWidth="5" /></Svg>
          </HeadIcon>
          <HeadIcon>
            <Svg w={44} h={48} vb="0 0 44 48"><path d="M6 34C0 26 0 4 22 2c14-1 22 8 20 20l2 8-5 1v9l-10 1v7H10v-10z" fill="#666" /><circle cx="17" cy="20" r="7" fill="#ddd" /><circle cx="17" cy="20" r="3" fill="#666" /><circle cx="28" cy="11" r="5" fill="#ddd" /><circle cx="28" cy="11" r="2" fill="#666" /></Svg>
          </HeadIcon>
          <ShareBtn>Share</ShareBtn>
          <Svg w={46} h={46} vb="0 0 46 46"><circle cx="23" cy="23" r="22" fill="#666" /><path d="M15 17c0-10 16-10 16 0 0 6-8 6-8 13" fill="none" stroke="#fff" strokeWidth="5" /><circle cx="23" cy="37" r="3" fill="#fff" /></Svg>
          <Gap $w={20} />
          <Svg w={20} h={14} vb="0 0 20 14"><polygon points="0,0 20,0 10,14" fill={D} /></Svg>
          <Gap $w={28} />
          <Svg w={60} h={60} vb="0 0 60 60"><circle cx="30" cy="30" r="29" fill={B} /><circle cx="30" cy="25" r="15" fill="#fff" /><path d="M6 60c2-24 46-24 48 0z" fill="#fff" /></Svg>
          <UserName>Caleb Distel</UserName>
          <Svg w={20} h={14} vb="0 0 20 14"><polygon points="0,0 20,0 10,14" fill={D} /></Svg>
          <Gap $w={13} />
        </HeaderRight>
      </Header>

      <Body>
        <Rail>
          <RailSlot $h={88}>
            <Svg w={52} h={52} vb="0 0 52 52"><circle cx="11" cy="10" r="8" fill="none" stroke={D} strokeWidth="3.5" /><path d="M11 18v16M11 34c8 0 8-6 14-6" fill="none" stroke={D} strokeWidth="3.5" /><circle cx="11" cy="44" r="7" fill={D} /><path d="M28 5h22M32 18h18M28 30h22M32 43h18" stroke={D} strokeWidth="6" /></Svg>
          </RailSlot>
          <RailSlot $h={88}>
            <Svg w={46} h={52} vb="0 0 46 52"><path d="M14 0v52" stroke={D} strokeWidth="6" strokeDasharray="6 6" /><circle cx="14" cy="24" r="8" fill={D} /><path d="M34 30v20M24 40h20" stroke={B} strokeWidth="6" /></Svg>
          </RailSlot>
          <RailSlot $h={88}>
            <Svg w={48} h={44} vb="0 0 48 44"><ellipse cx="24" cy="16" rx="24" ry="16" fill={D} /><path d="M10 24 2 43l18-11z" fill={D} /></Svg>
          </RailSlot>
          <RailSlot $h={88} $line>
            <Svg w={48} h={50} vb="0 0 48 50"><circle cx="26" cy="28" r="18" fill="none" stroke={D} strokeWidth="5" /><path d="M18 3h16M26 3v8M41 10l4 4" stroke={D} strokeWidth="4" /><path d="M26 30l8-12" stroke={D} strokeWidth="4" /><path d="M0 24h12M3 31h9M6 38h9" stroke={D} strokeWidth="3" /></Svg>
          </RailSlot>
          <RailSlot $h={90}>
            <Svg w={42} h={50} vb="0 0 42 50"><rect x="2" y="2" width="38" height="46" rx="5" fill="none" stroke={D} strokeWidth="3.5" /><path d="M8 12l3 4 5-6M8 24l3 4 5-6M8 36l3 4 5-6" fill="none" stroke={D} strokeWidth="2" /><path d="M21 13h14M21 25h14M21 37h14" stroke={D} strokeWidth="4" /></Svg>
          </RailSlot>
          <RailFoot>
            <Svg w={46} h={42} vb="0 0 46 42"><path d="M0 4a3 3 0 0 1 3-3h40a3 3 0 0 1 3 3v15H30a14 14 0 0 0-26 0H0z" fill={D} /><circle cx="24" cy="22" r="10" fill="none" stroke={D} strokeWidth="5" /><path d="M32 30l11 11" stroke={D} strokeWidth="5" /></Svg>
          </RailFoot>
        </Rail>

        <Main>
          <Toolbar>
            {TOOL_GROUPS.map((g, i) => (
              <React.Fragment key={i}>
                {i > 0 && <Sep />}
                {g === 'INSERT' ? (
                  <InsertBtn>{TOOL_ICONS.insert}Insert</InsertBtn>
                ) : (
                  <ToolGroup $pl={i >= 4 ? 3 : 2} $pr={2}>
                    {g.map(k => <Tool key={k}>{TOOL_ICONS[k]}</Tool>)}
                  </ToolGroup>
                )}
              </React.Fragment>
            ))}
            <SearchPill>
              Search tools...
              <Kbd $ml={6}>alt/⌥</Kbd>
              <Kbd>c</Kbd>
            </SearchPill>
          </Toolbar>

          <Workspace>
            <Model />
            <ListPanel>
              <FilterRow>
                <FunnelSlot>
                  <Svg w={38} h={38} vb="0 0 38 38"><path d="M2 2h34L22 20v16l-6-4V20z" fill="none" stroke={D} strokeWidth="2.5" /></Svg>
                </FunnelSlot>
                <FilterBox>Filter by name</FilterBox>
                <Svg w={36} h={36} vb="0 0 36 36"><path d="M0 4h5M9 4h27M0 14h5M9 14h27M0 24h5M9 24h27M0 33h5M9 33h27" stroke={D} strokeWidth="5" /></Svg>
              </FilterRow>
              <ListHead>
                Instances (75)
                <Svg w={46} h={36} vb="0 0 46 36"><path d="M1 12V1h16l4 5h24v29H8" fill="none" stroke="#aaa" strokeWidth="2" /><path d="M12 16v18M3 25h18" stroke="#8fa5d8" strokeWidth="6" /></Svg>
              </ListHead>
              <ListScroll>
                <Rows>
                  <Row>
                    <RedDownCube />
                    <RowName $w={134} $ml={0}>DRIV...</RowName>
                    <Svg w={22} h={46} vb="0 0 22 46"><path d="M11 0v10" stroke={D} strokeWidth="4" /><polygon points="1,10 21,10 11,22" fill={D} /><circle cx="11" cy="35" r="9" fill="none" stroke={D} strokeWidth="3" /><circle cx="11" cy="35" r="4" fill={D} /></Svg>
                  </Row>
                  <Row>
                    <Chevron />
                    <Svg w={38} h={22} vb="0 0 38 22"><circle cx="19" cy="11" r="7.5" fill="none" stroke="#555" strokeWidth="2" /><circle cx="19" cy="11" r="3" fill="#555" /></Svg>
                    <RowName>Origin</RowName>
                  </Row>
                  {ROWS.map((r, i) => (
                    <Row key={i} $sel={r.sel}>
                      <Chevron>{r.chev && <Chev />}</Chevron>
                      {r.kind === 'sub' ? <SubAsmIcon /> : r.kind === 'set' ? <PartSetIcon /> : <PartIcon off={r.off} />}
                      <RowName $off={r.off} $w={r.kind ? 135 : 175}>{r.name}</RowName>
                      {r.kind ? <ConnectorDot /> : <FixArrow dot={r.dot} />}
                    </Row>
                  ))}
                </Rows>
                <ScrollCol>
                  <ArrowUp />
                  <Thumb $h={343} />
                  <ArrowDown />
                </ScrollCol>
              </ListScroll>
            </ListPanel>

            <MassPanel>
              <MassBody>
                <MassTitle>Mass and section properties</MassTitle>
                <PanelTabs>
                  <PanelTab $on>Part</PanelTab>
                  <PanelTab>Face</PanelTab>
                </PanelTabs>
                <InstBox>
                  <InstLabel>Instances to measure</InstLabel>
                  <InstanceRow n={1} />
                  <InstanceRow n={2} alt />
                  <InstanceRow n={6} />
                  <InstanceRow n={4} alt />
                </InstBox>
                <MateInput>Mate connector for reference frame</MateInput>
                <VarRow><EmptyCheck />Show calculation variance</VarRow>
                <PropRow $h={71}>
                  <PropText>Mass</PropText>
                  <Override><FilledCheck />Override</Override>
                  <Field>68.567 lb</Field>
                </PropRow>
                <PropRow $h={73}><PropText>Volume</PropText><Field>2962.182 in<sup>3</sup></Field></PropRow>
                <PropRow $h={68}><PropText>Surface area</PropText><Field>11685.431 in<sup>2</sup></Field></PropRow>
                <PropRow $h={72}><PropText>Center of mass</PropText><Override $ml={22}><FilledCheck />Override</Override></PropRow>
                <Axis h={72} l="X" c="#a7313a" d="M2 6l4-4 12 12 4-4v14H8l4-4z" v="-2.457 in" />
                <Axis h={69} l="Y" c="#4a8f22" d="M2 22l12-14-4-4h12v14l-4-4L6 26z" v="0.265 in" />
                <Axis h={70} l="Z" c={B} d="M12 1l7 9h-5v18h-4V10H5z" v="1.701 in" />
                <PropRow $h={74}><PropText>Mass moments of inertia (in<sup>2</sup> lb)</PropText><Override $ml={22}><FilledCheck />Override</Override></PropRow>
                <InertiaRow $h={71}>
                  <InertiaCell><InertiaName>Lxx</InertiaName><Field>5022.5</Field></InertiaCell>
                  <InertiaCell><InertiaName>Lxy</InertiaName><Field>-44.447</Field></InertiaCell>
                  <InertiaCell><InertiaName>Lxz</InertiaName><Field>26.287</Field></InertiaCell>
                </InertiaRow>
                <InertiaRow $h={71}>
                  <InertiaCell><InertiaName>Lyx</InertiaName><Field>-44.447</Field></InertiaCell>
                  <InertiaCell><InertiaName>Lyy</InertiaName><Field>6844.764</Field></InertiaCell>
                  <InertiaCell><InertiaName>Lyz</InertiaName><Field>11.32</Field></InertiaCell>
                </InertiaRow>
              </MassBody>
              <ScrollCol $w={30} $ml={7} $pad="87px 0 68px 0">
                <ArrowUp />
                <Thumb $h={1047} />
                <ArrowDown />
              </ScrollCol>
              <MassFoot>?</MassFoot>
            </MassPanel>
            <GreenPatch />
            <Toast>
              <Svg w={40} h={40} vb="0 0 40 40"><path d="M20 2c2 0 3 1 4 3l15 30c1 2 0 3-2 3H3c-2 0-3-1-2-3L16 5c1-2 2-3 4-3z" fill="#f3c546" /><path d="M20 13v13" stroke="#fff" strokeWidth="4" /><circle cx="20" cy="32" r="2.5" fill="#fff" /></Svg>
              One or more parts do not have a material defined.
              <ToastClose>
                <Svg w={26} h={26} vb="0 0 26 26"><path d="M3 3l20 20M23 3 3 23" stroke="#8a6d20" strokeWidth="5" /></Svg>
              </ToastClose>
            </Toast>
            <ViewCube />
            <Dock>
              <DockCell $first>
                <Svg w={46} h={46} vb="0 0 46 46"><rect x="1" y="7" width="44" height="32" rx="6" fill="none" stroke={D} strokeWidth="2.5" /><path d="M9 14h25M12 21h30M12 28h30" stroke={D} strokeWidth="3.5" /></Svg>
              </DockCell>
              <DockCell>
                <Svg w={50} h={46} vb="0 0 50 46"><path d="M12 20l20-8 16 8v16l-20 8-16-8z" fill="#fff" stroke={D} strokeWidth="3" /><path d="M12 20l16 8 20-8M28 28v16" fill="none" stroke={D} strokeWidth="3" /><rect x="0" y="2" width="25" height="16" fill={B} /><path d="M2 7h21M2 12h21M8 3v14M16 3v14" stroke="#fff" strokeWidth="1.5" /></Svg>
              </DockCell>
              <DockCell>
                <Svg w={48} h={46} vb="0 0 48 46"><path d="M2 8l4-3h12l1 3v10H2z" fill="#bbb" stroke="#555" strokeWidth="1.5" /><path d="M10 20v6h22" fill="none" stroke={B} strokeWidth="2.5" strokeDasharray="5 3" /><path d="M18 34l14-5V20l6-4 9 6v22H24l-6-4z" fill="#fff" stroke={D} strokeWidth="2" /></Svg>
              </DockCell>
              <DockCell>
                <Svg w={48} h={46} vb="0 0 48 46"><rect x="2" y="28" width="42" height="16" fill="#fff" stroke={D} strokeWidth="2.5" /><path d="M28 36V3h18v33" fill="none" stroke={B} strokeWidth="2.5" strokeDasharray="5 3" /><ellipse cx="37" cy="36" rx="9" ry="8" fill="#fff" stroke={B} strokeWidth="2.5" /><ellipse cx="37" cy="36" rx="4" ry="3" fill="none" stroke={D} strokeWidth="2" /></Svg>
              </DockCell>
              <DockCell>
                <Svg w={42} h={46} vb="0 0 42 46"><polygon points="12,6 20,2 20,22" fill="#a9cdee" /><polygon points="30,6 22,2 22,22" fill="#a9cdee" /><polygon points="9,9 20,24 0,30" fill={B} /><polygon points="33,9 22,24 42,30" fill="#999" /><polygon points="0,32 20,27 20,45" fill={B} /><polygon points="42,32 22,27 22,45" fill="#aaa" /></Svg>
              </DockCell>
              <DockCell>
                <Svg w={50} h={44} vb="0 0 50 44"><path d="M3 2h28v22H3z" fill={D} /><path d="M4 9h26M4 16h26M12 3v20M21 3v20" stroke="#fff" strokeWidth="1.8" /><path d="M3 24c0 8 1 12 5 18M41 10c6 10 6 20-1 32" fill="none" stroke={D} strokeWidth="5" /><path d="M12 40c8 0 10-22 24-24M10 18c12 0 14 20 26 20" fill="none" stroke={D} strokeWidth="5" /></Svg>
              </DockCell>
            </Dock>
            <MeasureTools>
              <Svg w={40} h={32} vb="0 0 40 32"><path d="M1 18h16V8a11 11 0 1 1 22 4c0 10-3 20-6 20H1z" fill="#fff" stroke={D} strokeWidth="2.5" /><circle cx="27" cy="10" r="4" fill="none" stroke={D} strokeWidth="2" /><path d="M4 30v-5M10 30v-5M16 30v-5M22 30v-5M28 30v-5" stroke={D} strokeWidth="1.5" /></Svg>
              <Svg w={50} h={34} vb="0 0 50 34"><path d="M2 32c0-36 46-36 46 0z" fill="#fff" stroke={D} strokeWidth="2.5" /><path d="M14 30c0-18 22-18 22 0" fill="none" stroke={D} strokeWidth="2" /><path d="M2 32h46" stroke={D} strokeWidth="3" /><path d="M20 30c2-6 8-6 10 0" fill="none" stroke={D} strokeWidth="2" /></Svg>
              <Svg w={34} h={36} vb="0 0 34 36"><path d="M2 2h30M17 2v30M4 32h26" stroke={D} strokeWidth="3" /><path d="M2 3 0 18h8zM32 3l-6 15h8z" fill="none" stroke={D} strokeWidth="2" /><rect x="2" y="30" width="30" height="5" fill={D} /></Svg>
            </MeasureTools>
          </Workspace>

          <TabBar>
            <AddTab>
              <Svg w={38} h={38} vb="0 0 38 38"><path d="M19 0v38M0 19h38" stroke="#666" strokeWidth="7" /></Svg>
            </AddTab>
            <Tab $on $w={302} $pl={22}><AsmIcon />DRIVETRAIN</Tab>
            {TABS.map((t, i) => (
              <Tab key={i} $w={t.w} $pl={t.pl}>
                {t.lime && <Svg w={32} h={44} vb="0 0 32 44"><ellipse cx="16" cy="22" rx="16" ry="22" fill="#85a0cd" /><circle cx="16" cy="22" r="7" fill="#fff" /><rect x="14" y="2" width="4" height="6" fill="#fff" /><rect x="14" y="36" width="4" height="6" fill="#fff" /></Svg>}
                {t.draw ? <DrawIcon /> : <StudioIcon />}
                {t.label}
              </Tab>
            ))}
            <TabFade />
            <TabArrows>
              <Svg w={20} h={52} vb="0 0 20 52"><path d="M17 2 3 26l14 24" fill="none" stroke="#aaa" strokeWidth="5" /></Svg>
              <Svg w={20} h={52} vb="0 0 20 52"><path d="M3 2l14 24L3 50" fill="none" stroke="#666" strokeWidth="5" /></Svg>
            </TabArrows>
          </TabBar>
        </Main>
      </Body>

      <Taskbar>
        <StartSlot>
          <Svg w={58} h={58} vb="0 0 58 58"><path d="M0 2a2 2 0 0 1 2-2h26v28H0zM30 0h26a2 2 0 0 1 2 2v26H30zM0 30h28v28H0zM30 30h28v28H30z" fill="#3fc0f5" /></Svg>
        </StartSlot>
        <TaskSearch>
          <Svg w={30} h={30} vb="0 0 30 30"><circle cx="15" cy="15" r="12" fill="#5a5664" stroke="#eee" strokeWidth="4" /></Svg>
          Search
        </TaskSearch>
        <AppRow>
          {AppIcons.map((ic, i) => <AppSlot key={i}>{ic}</AppSlot>)}
        </AppRow>
        <Tray $x={2820} $y={28}>
          <Svg w={60} h={40} vb="0 0 60 40"><path d="M20 2C6 10 2 22 6 38h28C34 24 26 18 20 2z" fill="#f09a28" /><circle cx="28" cy="36" r="16" fill="#a4c4f0" /></Svg>
        </Tray>
        <TrayBadge $x={2848} $y={3} $fs={24}>7</TrayBadge>
        <Tray $x={2892} $y={18}>88°F</Tray>
        <Tray $x={3220} $y={34}><Svg w={24} h={16} vb="0 0 24 16"><path d="M2 14 12 3l10 11" fill="none" stroke="#fff" strokeWidth="2.5" /></Svg></Tray>
        <Tray $x={3296} $y={26}><Svg w={28} h={40} vb="0 0 28 40"><ellipse cx="14" cy="20" rx="14" ry="20" fill="#0a84ff" /><path d="M8 12l12 14-6 6V8l6 6L8 28" fill="none" stroke="#fff" strokeWidth="2" /></Svg></Tray>
        <Tray $x={3360} $y={26}><Svg w={36} h={40} vb="0 0 36 40"><rect x="2" y="2" width="32" height="28" rx="4" fill="none" stroke="#fff" strokeWidth="3" /></Svg></Tray>
        <Tray $x={3452} $y={24}><Svg w={42} h={40} vb="0 0 42 40"><path d="M3 16c10-12 26-12 36 0M9 24c7-8 17-8 24 0M15 32c4-4 8-4 12 0" fill="none" stroke="#fff" strokeWidth="3" /></Svg></Tray>
        <Tray $x={3514} $y={26}><Svg w={36} h={40} vb="0 0 36 40"><path d="M2 14h6l8-8v28l-8-8H2zM22 14l12 14M34 14 22 28" fill="none" stroke="#fff" strokeWidth="2.5" /></Svg></Tray>
        <Tray $x={3560} $y={20}><Svg w={40} h={44} vb="0 0 40 44"><path d="M12 2 6 22h8l-4 14" fill="none" stroke="#fff" strokeWidth="3" /><rect x="18" y="14" width="20" height="28" rx="3" fill="none" stroke="#fff" strokeWidth="3" /></Svg></Tray>
        <Tray $x={3680} $y={18}>2:09 AM</Tray>
      </Taskbar>
    </Page>
  )
}
